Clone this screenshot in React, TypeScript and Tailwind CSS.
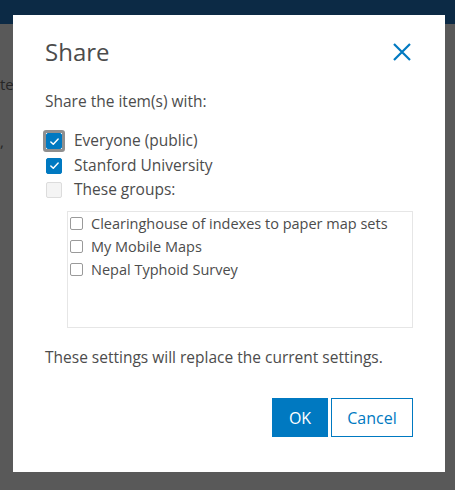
import { useState } from "react";

type Group = { id: number; name: string };

const groups: Group[] = [
    { id: 1, name: "Clearinghouse of indexes to paper map sets" },
    { id: 2, name: "My Mobile Maps" },
    { id: 3, name: "Nepal Typhoid Survey" },
];

function CheckMark() {
    return (
        <svg viewBox="0 0 16 16" className="h-[13px] w-[13px]" aria-hidden="true">
            <path d="M3.5 8.5l3 3 6-6.5" fill="none" stroke="white" strokeWidth="1.8" strokeLinecap="round" strokeLinejoin="round" />
        </svg>
    );
}

function BigCheck({ checked, disabled, focused }: { checked: boolean; disabled?: boolean; focused?: boolean }) {
    const box = checked
        ? "bg-[#0079c1] border-[#0079c1]"
        : disabled
          ? "bg-[#f4f4f4] border-[#dcdcdc]"
          : "bg-white border-[#959595]";
    return (
        <span
            className={`flex h-[22px] w-[22px] items-center justify-center rounded-[3px] border-[3px] ${
                focused ? "border-[#8f8f8f]" : "border-transparent"
            }`}
        >
            <span className={`flex h-[16px] w-[16px] items-center justify-center rounded-[2px] border ${box}`}>
                {checked ? <CheckMark /> : null}
            </span>
        </span>
    );
}

export default function App() {
    const [everyone, setEveryone] = useState(true);
    const [org, setOrg] = useState(true);
    const [picked, setPicked] = useState<number[]>([]);

    function toggleGroup(id: number) {
        setPicked((cur) => (cur.includes(id) ? cur.filter((g) => g !== id) : [...cur, id]));
    }

    return (
        <div className="relative h-[490px] w-[455px] overflow-hidden bg-[#595959] font-['Open_Sans','Lato',sans-serif]">
            <div className="h-[24px] bg-[#0c2a45]" />
            <div className="pt-[53px] text-[15px] leading-none text-[#262626]">te</div>
            <div className="pt-[42px] text-[15px] leading-none text-[#262626]">,</div>

            <div className="absolute left-[13px] top-[15px] h-[457px] w-[432px] bg-white px-[32px] text-[#4c4c4c]">
                <div className="flex items-center justify-between pt-[22px]">
                    <h1 className="text-[24px] font-normal leading-[30px] text-[#4c4c4c]">Share</h1>
                    <button className="mr-[-1px] flex h-[24px] w-[24px] items-center justify-center text-[#0079c1]" aria-label="Close">
                        <svg viewBox="0 0 20 20" className="h-[20px] w-[20px]">
                            <path d="M2 2l16 16M18 2L2 18" stroke="currentColor" strokeWidth="2.2" fill="none" />
                        </svg>
                    </button>
                </div>

                <p className="mt-[24px] text-[15.5px] leading-[20px]">Share the item(s) with:</p>

                <div className="mt-[18px] flex flex-col">
                    <label className="flex h-[24px] items-center gap-[9px] text-[15.5px]" onClick={() => setEveryone(!everyone)}>
                        <span className="ml-[-2px]">
                            <BigCheck checked={everyone} focused />
                        </span>
                        <span>Everyone (public)</span>
                    </label>
                    <label className="flex h-[25px] items-center gap-[9px] text-[15.5px]" onClick={() => setOrg(!org)}>
                        <span className="ml-[-2px]">
                            <BigCheck checked={org} />
                        </span>
                        <span>Stanford University</span>
                    </label>
                    <label className="flex h-[24px] items-center gap-[9px] text-[15.5px]">
                        <span className="ml-[-2px]">
                            <BigCheck checked={false} disabled />
                        </span>
                        <span>These groups:</span>
                    </label>
                </div>

                <div className="ml-[22px] mt-[9px] h-[117px] w-[346px] border border-[#e6e6e6] px-[2px] pt-0">
                    {groups.map((g) => (
                        <label key={g.id} className="flex h-[23px] items-center gap-[8px] text-[14.5px]" onClick={() => toggleGroup(g.id)}>
                            <span
                                className={`flex h-[13px] w-[13px] items-center justify-center rounded-[2px] border ${
                                    picked.includes(g.id) ? "border-[#0079c1] bg-[#0079c1]" : "border-[#9a9a9a] bg-white"
                                }`}
                            />
                            <span>{g.name}</span>
                        </label>
                    ))}
                </div>

                <p className="mt-[19px] text-[15.5px] leading-[20px]">These settings will replace the current settings.</p>

                <div className="mt-[31px] flex justify-end gap-[3px]">
                    <button className="h-[39px] w-[56px] bg-[#0079c1] text-[16px] text-white">OK</button>
                    <button className="h-[39px] w-[82px] border border-[#0079c1] bg-white text-[16px] text-[#0079c1]">Cancel</button>
                </div>
            </div>
        </div>
    );
}
